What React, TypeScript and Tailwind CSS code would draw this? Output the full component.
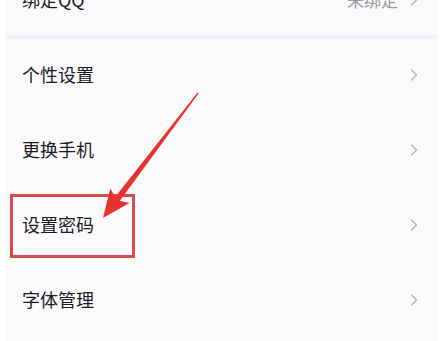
import React from "react";

const Chevron = () => (
  <svg width="8" height="12" viewBox="0 0 8 12" className="shrink-0">
    <path d="M1.5 1 L6.5 6 L1.5 11" fill="none" stroke="#b4b4b8" strokeWidth="1.4" strokeLinecap="round" strokeLinejoin="round" />
  </svg>
);

const Row = ({ label, value }: { label: string; value?: string }) => (
  <div className="h-[75px] flex items-center justify-between pl-[17px] pr-[19px]">
    <span className="text-[18px] text-[#1c1c1e]">{label}</span>
    <div className="flex items-center gap-[12px]">
      {value && <span className="text-[17px] text-[#9a9a9e]">{value}</span>}
      <Chevron />
    </div>
  </div>
);

export default function App() {
  return (
    <div
      className="relative w-[448px] h-[341px] overflow-hidden bg-white"
      style={{ fontFamily: '"Noto Sans CJK SC", "Noto Sans", sans-serif' }}
    >
      <div className="ml-[5px] w-[432px] -mt-[38px] bg-[#faf9fc]">
        <Row label="绑定QQ" value="未绑定" />
        <div className="h-[4px] -mt-[2px] -mb-[2px] bg-[#f3f2f6]" />
        <Row label="个性设置" />
        <Row label="更换手机" />
        <Row label="设置密码" />
        <Row label="字体管理" />
        <div className="h-[40px]" />
      </div>

      <div className="absolute left-[10px] top-[194px] w-[125px] h-[64px] border-[3px] border-[#d44c4c]" />

      <svg className="absolute left-0 top-0" width="448" height="341" viewBox="0 0 448 341">
        <polygon
          points="103,218 129.5,203 119.9,200.7 198.6,93.4 197.6,92.6 115.1,197.1 110.3,188.4"
          fill="#e8322f"
        />
      </svg>
    </div>
  );
}
